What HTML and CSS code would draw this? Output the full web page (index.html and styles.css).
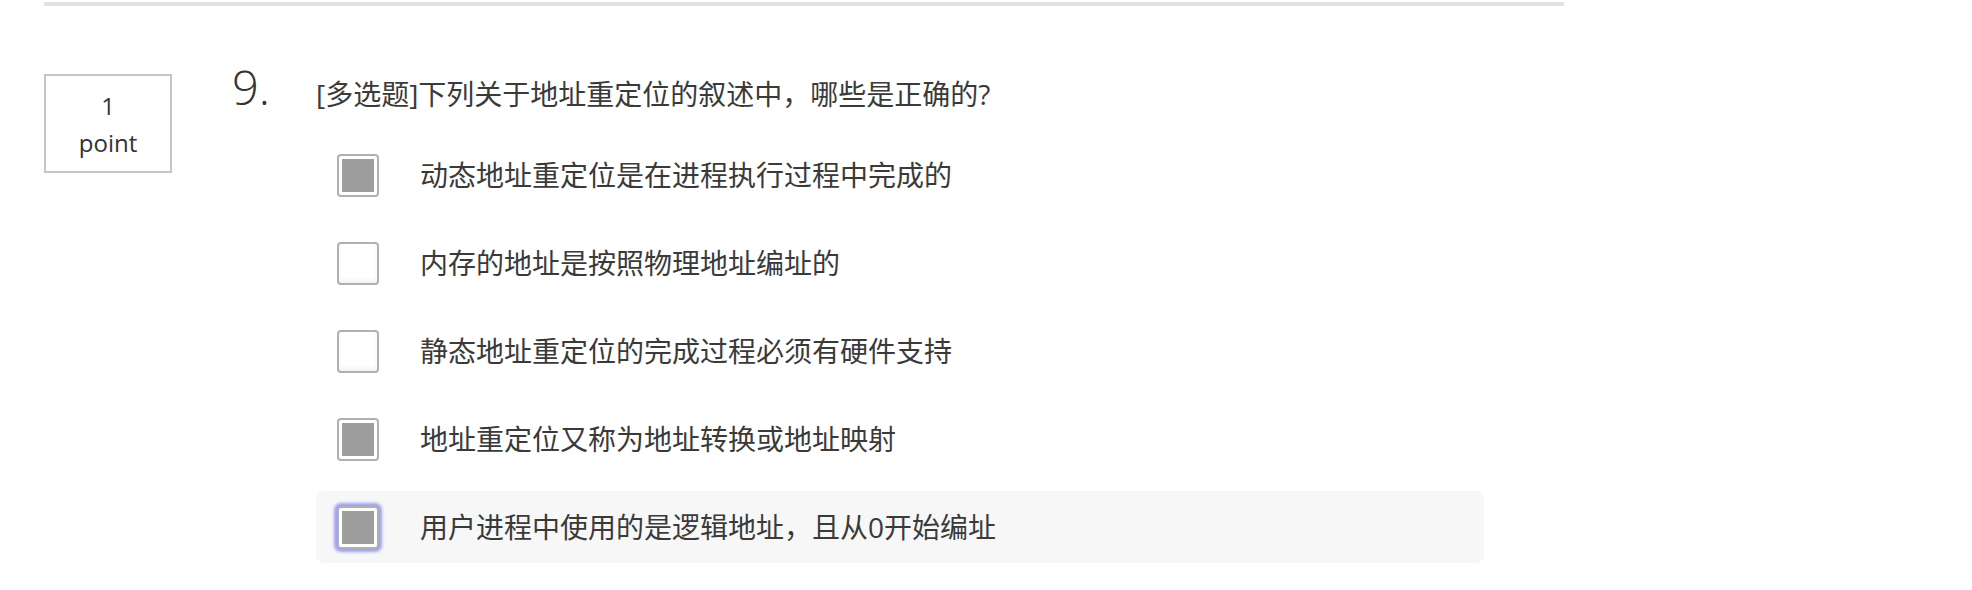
FILE: index.html
```html
<!DOCTYPE html>
<html lang="zh">
<head>
<meta charset="utf-8">
<title>Quiz</title>
<link rel="stylesheet" href="styles.css">
</head>
<body>
<div class="rule"></div>
<div class="question">
  <div class="points"><span>1</span><span>point</span></div>
  <div class="qnum">9.</div>
  <div class="qbody">
    <div class="qtext">[多选题]下列关于地址重定位的叙述中，哪些是正确的?</div>
    <div class="options">
      <label class="option"><span class="box checked"><span class="fill"></span></span><span class="otext">动态地址重定位是在进程执行过程中完成的</span></label>
      <label class="option"><span class="box"></span><span class="otext">内存的地址是按照物理地址编址的</span></label>
      <label class="option"><span class="box"></span><span class="otext">静态地址重定位的完成过程必须有硬件支持</span></label>
      <label class="option"><span class="box checked"><span class="fill"></span></span><span class="otext">地址重定位又称为地址转换或地址映射</span></label>
      <label class="option active"><span class="box checked focused"><span class="fill"></span></span><span class="otext">用户进程中使用的是逻辑地址，且从0开始编址</span></label>
    </div>
  </div>
</div>
</body>
</html>
```

FILE: styles.css
```css
html, body {
  margin: 0;
  padding: 0;
  background: #fff;
}
body {
  font-family: "Open Sans", "Noto Sans CJK SC", sans-serif;
  color: #3a3a3a;
}
.rule {
  margin: 2px 0 0 44px;
  width: 1520px;
  height: 4px;
  background: #e0e0e0;
  border-radius: 1px;
}
.question {
  display: flex;
  align-items: flex-start;
  margin-top: 68px;
  padding-left: 44px;
}
.points {
  box-sizing: border-box;
  width: 128px;
  height: 99px;
  border: 2px solid #c6c6c6;
  display: flex;
  flex-direction: column;
  align-items: center;
  justify-content: center;
  font-size: 24px;
  line-height: 37px;
  color: #333;
}
.qnum {
  width: 84px;
  margin-left: 60px;
  margin-top: -10px;
  font-size: 47px;
  font-weight: 300;
  line-height: 46px;
  color: #333;
}
.qbody {
  display: flex;
  flex-direction: column;
}
.qtext {
  padding-left: 0;
  font-size: 28px;
  line-height: 40px;
}
.options {
  display: flex;
  flex-direction: column;
  gap: 16px;
  margin-top: 25px;
}
.option {
  display: flex;
  align-items: center;
  box-sizing: border-box;
  width: 1168px;
  height: 72px;
  padding-left: 21px;
  border-radius: 8px;
  gap: 41px;
}
.option.active {
  background: #f7f7f7;
}
.box {
  box-sizing: border-box;
  width: 42px;
  height: 43px;
  border: 2px solid #b0b0b0;
  border-radius: 4px;
  background: #fff;
  box-shadow: inset 0 -3px 4px rgba(0, 0, 0, 0.05);
  display: flex;
  flex-shrink: 0;
}
.box.checked {
  padding: 3px;
  box-shadow: none;
}
.box .fill {
  flex: 1;
  background: #9e9e9e;
}
.box.focused {
  box-shadow: 0 0 3px 3px rgba(130, 130, 240, 0.75);
}
.otext {
  font-size: 28px;
  line-height: 40px;
}
```
